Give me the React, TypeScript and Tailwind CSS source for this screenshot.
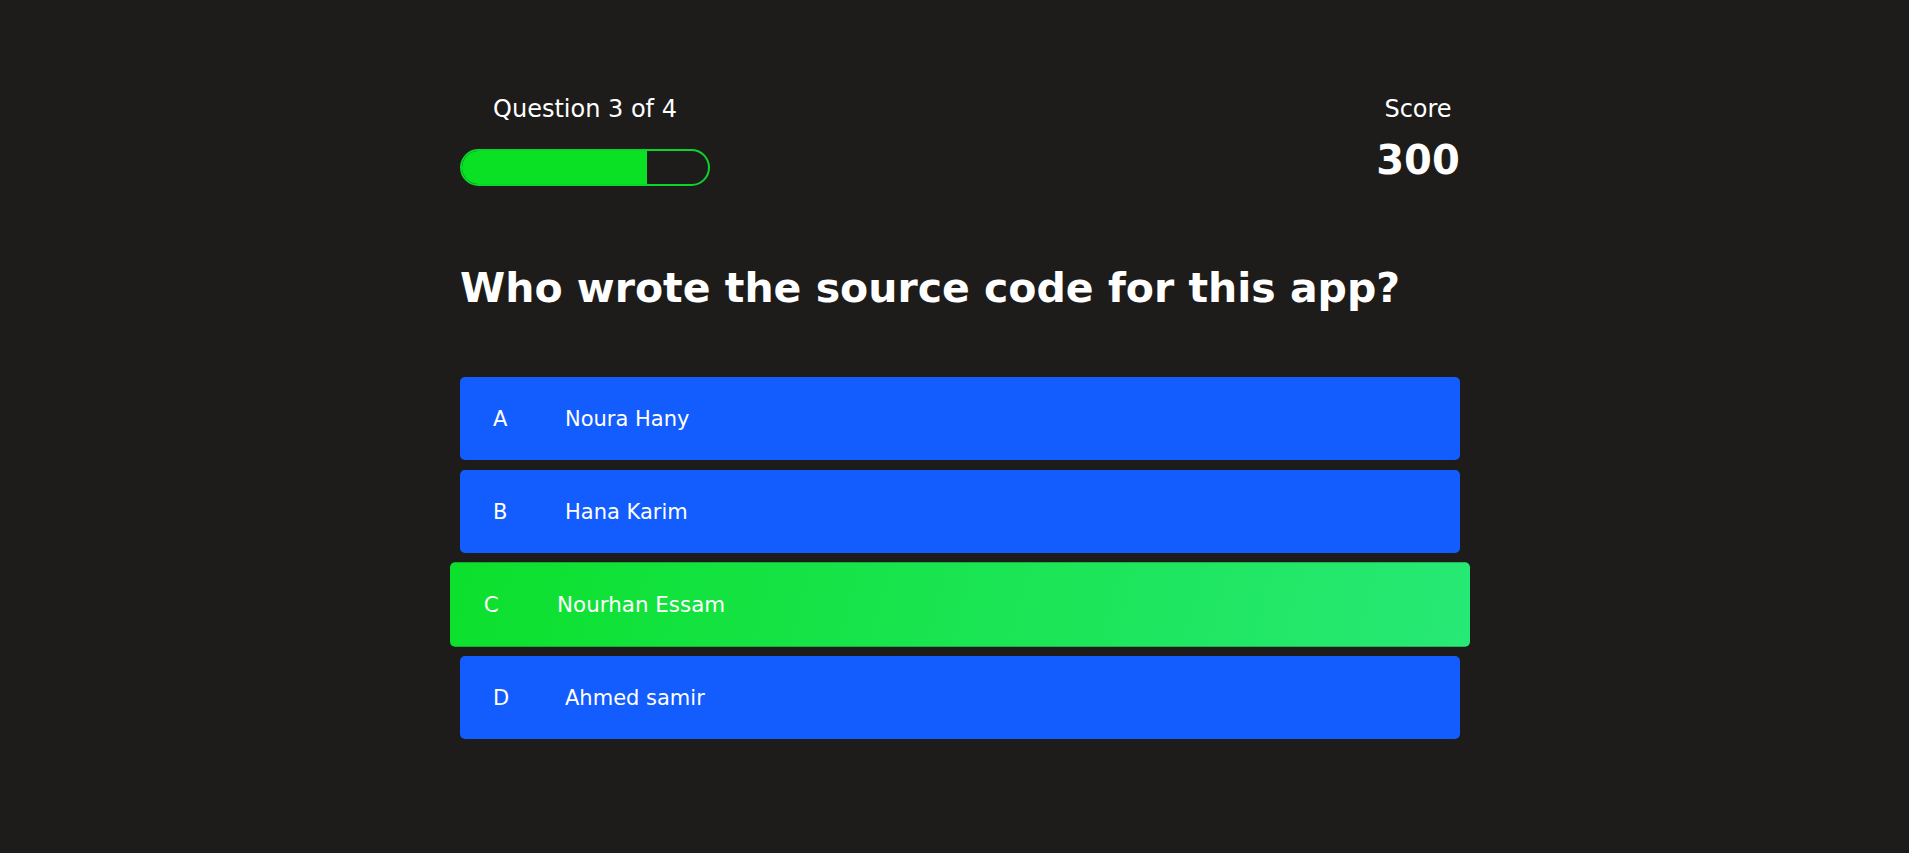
import React from "react";

const answers = [
  { letter: "A", text: "Noura Hany" },
  { letter: "B", text: "Hana Karim" },
  { letter: "C", text: "Nourhan Essam", correct: true },
  { letter: "D", text: "Ahmed samir" },
];

const font = { fontFamily: '"Comic Sans MS", "DejaVu Sans", sans-serif' };

const App = () => {
  const progress = 75;

  return (
    <div className="min-h-screen bg-[#1d1c1a] text-white" style={font}>
      <div className="flex justify-center pl-[11px]">
        <div className="w-[1000px] pt-[93px]">
          {/* Header */}
          <div className="flex items-start justify-between">
            <div className="w-[250px] flex flex-col items-center">
              <div className="text-[24px] leading-[32px]">Question 3 of 4</div>
              <div className="mt-[24px] w-full h-[37px] rounded-full border-2 border-[#0ad52a] overflow-hidden">
                <div className="h-full bg-[#0ae124]" style={{ width: `${progress}%` }} />
              </div>
            </div>
            <div className="w-[84px] flex flex-col items-center">
              <div className="text-[24px] leading-[32px]">Score</div>
              <div className="mt-[11px] text-[40px] leading-[48px] font-bold">300</div>
            </div>
          </div>

          {/* Question */}
          <h1 className="mt-[74px] text-[41px] leading-[56px] font-bold">
            Who wrote the source code for this app?
          </h1>

          {/* Answers */}
          <div className="mt-[61px] flex flex-col gap-[10px]">
            {answers.map((a) =>
              a.correct ? (
                <div
                  key={a.letter}
                  className="h-[83px] rounded-[5px] flex items-center pl-[33px] pt-[3px] text-[21px] scale-[1.02] bg-linear-[105deg] from-[#0ce02c] to-[#27e976]"
                >
                  <span className="w-[72px]">{a.letter}</span>
                  <span>{a.text}</span>
                </div>
              ) : (
                <div
                  key={a.letter}
                  className="h-[83px] rounded-[5px] flex items-center pl-[33px] pt-[3px] text-[21px] bg-[#135cfe]"
                >
                  <span className="w-[72px]">{a.letter}</span>
                  <span>{a.text}</span>
                </div>
              )
            )}
          </div>
        </div>
      </div>
    </div>
  );
};

export default App;
